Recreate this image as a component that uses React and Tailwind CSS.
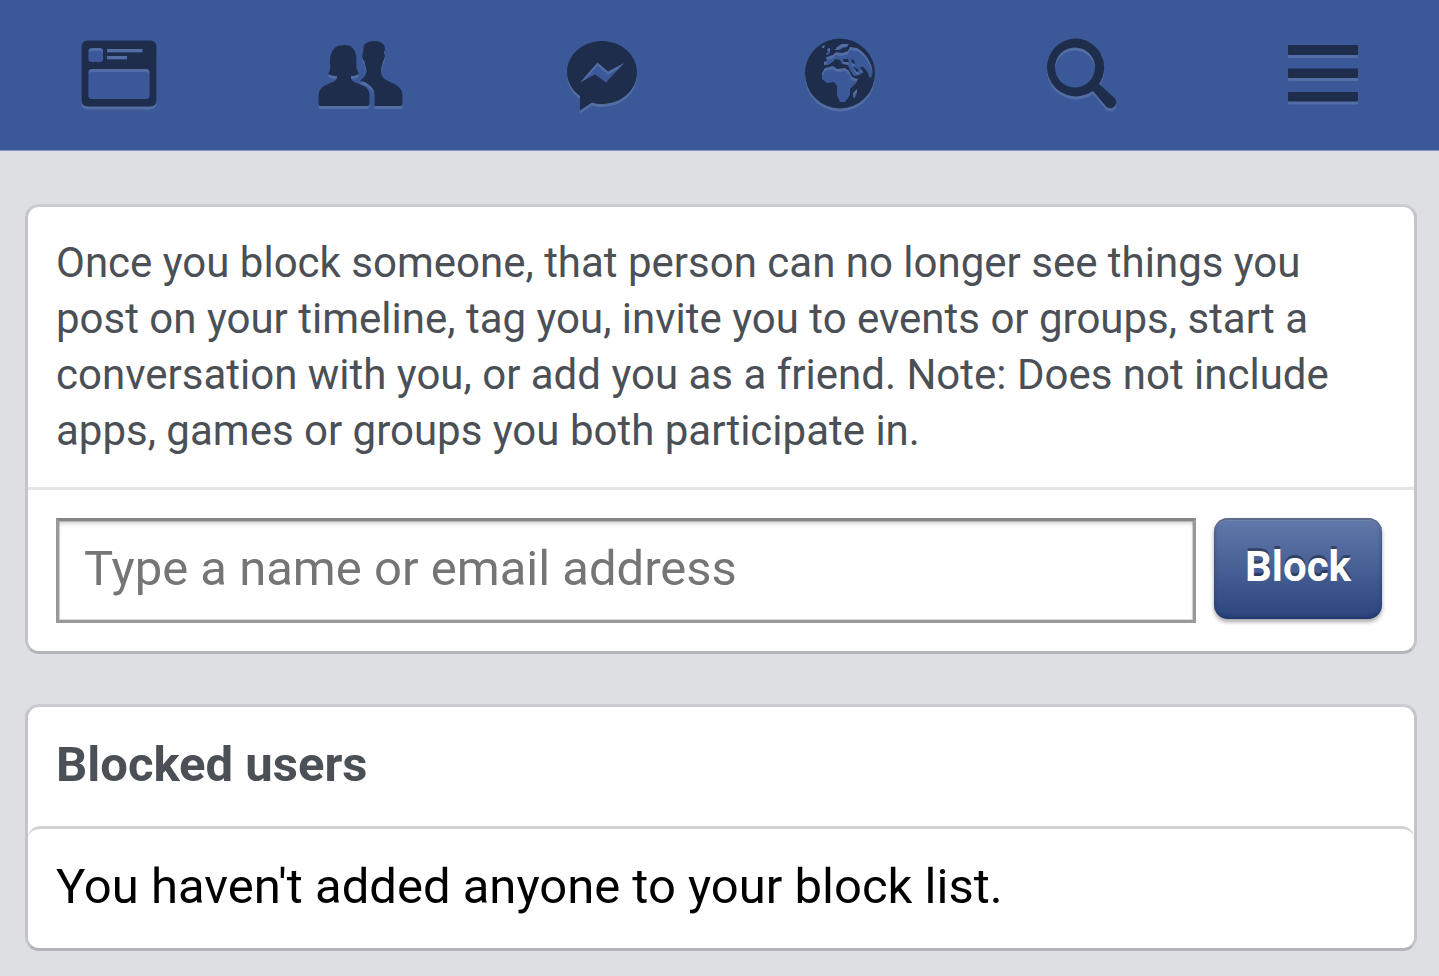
const iconClass =
  "block h-[90px] w-[90px] fill-[#1e2d4c] drop-shadow-[0_3px_0_rgba(255,255,255,0.13)]";

function FeedIcon() {
  return (
    <svg viewBox="0 0 90 90" className={iconClass} aria-hidden="true">
      <path
        fillRule="evenodd"
        d="M14 10.500H76Q82.500 10.500 82.500 17V70Q82.500 76.500 76 76.500H14Q7.500 76.500 7.500 70V17Q7.500 10.500 14 10.500ZM18 18Q14.500 18 14.500 21V29Q14.500 32 18 32H26Q29 32 29 29V21Q29 18 26 18ZM33 19V22.500H68.500V19ZM33 26V29.500H53V26ZM18 39Q14.500 39 14.500 42V66Q14.500 69 18 69H72Q75.500 69 75.500 66V42Q75.500 39 72 39Z"
      />
    </svg>
  );
}

function FriendsIcon() {
  return (
    <svg viewBox="0 0 90 90" className={iconClass} aria-hidden="true">
      <path d="M28 15.500C31 14.500 35 15.500 37 17.500C40 20 41.500 25 41.500 30C41.500 36 41 40 44 43.500C41.500 45.500 39 46 36 46C35.500 51 39 52 44 54C51 56.500 54.500 59 54.500 66V74Q54.500 76 52 76H5.500Q3.500 76 3.500 74V68C3.500 60 6 57 12 54.500C18 52 22.500 51 22 46C18.500 46 15 45.500 13 43.500C16 41 15 36 15 31C15 23 19 16 25 15.500Z" />
      <path d="M48.500 19C48 14 52 11 60 11C66 11 70 14 70 19.500L69 23C70.500 24 70 28 68 31.500C67 36 66 38 66 41C66 47 69 49 74 51.500C82 55 87.500 58 87.500 66V74Q87.500 76 85 76H59.500V66C59.500 58 54 53 45 50.500C49 48 51.500 45 51.500 40C50.500 37 50 34 49.500 31.500C47 29 47 25 48 23Z" />
    </svg>
  );
}

function MessengerIcon() {
  return (
    <svg viewBox="0 0 90 90" className={iconClass} aria-hidden="true">
      <path
        fillRule="evenodd"
        d="M46 11C65.500 11 81 25 81 42.500C81 60 65.500 74 46 74C42.500 74 39 73.500 36 72.500L24 80.500V66C16 60 11 52 11 42.500C11 25 26.500 11 46 11ZM24 52.500L39 44.500L50 52.500L68 33L52 41.500L41.500 32.500Z"
      />
    </svg>
  );
}

function GlobeIcon() {
  return (
    <svg viewBox="0 0 90 90" className={iconClass} aria-hidden="true">
      <path
        fillRule="evenodd"
        d="M44 8.500A35 35 0 1 1 44 78.500A35 35 0 1 1 44 8.500ZM39 20L41 17L46 14H53L51 17L47 18L44 20ZM28 32L31 31L30 27L37 25L40 22L46 23L52 21L54 17L61 18C68 22 73 29 75 35C77 40 77 44 75 48L73 47L72 43L69 39L67 37L64 37L67 42L64 45L58 46L54 40L52 35L46 34L44 30L39 29L37 32L32 35L28 35ZM26 43L29 38L37 36L41 39L49 38L53 41L56 47L62 49L60 53L54 59L54 65L49 72H44L41 65V56L38 52L31 53L26 49ZM57 68L57 63L61 59L61 63L59 68ZM30 24L32 22L31 19L34 18L34 23L31 25ZM26 16L29 15L28 18L26 18Z"
      />
      <path d="M47 29L52 29L53 32L48 32ZM55 29L58 30L59 34L56 33ZM57 36L63 40L61 42Z" />
    </svg>
  );
}

function SearchIcon() {
  return (
    <svg viewBox="0 0 90 90" className={iconClass} aria-hidden="true">
      <path
        fillRule="evenodd"
        d="M38 8.500A29 29 0 0 1 62 54L77 67.500C83 73 76 81.500 69.500 77L56 61A29 29 0 1 1 38 8.500ZM38 17.500A20 20 0 1 0 38 57.500A20 20 0 1 0 38 17.500Z"
      />
    </svg>
  );
}

function MenuIcon() {
  return (
    <svg viewBox="0 0 90 90" className={iconClass} aria-hidden="true">
      <rect x="10" y="15" width="70" height="10" rx="1" />
      <rect x="10" y="38.500" width="70" height="9.500" rx="1" />
      <rect x="10" y="62" width="70" height="9.500" rx="1" />
    </svg>
  );
}

const navItems = [
  { label: "News Feed", Icon: FeedIcon },
  { label: "Friend Requests", Icon: FriendsIcon },
  { label: "Messages", Icon: MessengerIcon },
  { label: "Notifications", Icon: GlobeIcon },
  { label: "Search", Icon: SearchIcon },
  { label: "Menu", Icon: MenuIcon },
];

const cardClass =
  "rounded-[14px] border-[3px] border-t-[#cbccd0] border-x-[#c4c5c7] border-b-[#b4b5b7] bg-white";

export default function App() {
  return (
    <div className="min-h-screen bg-[#dddfe3] font-['Roboto',sans-serif]">
      <nav className="flex justify-between border-b border-[#8296c0] bg-[#3b5998] pt-[30px] pr-[71px] pb-[30px] pl-[74px]">
        {navItems.map(({ label, Icon }) => (
          <a key={label} href="#" aria-label={label}>
            <Icon />
          </a>
        ))}
      </nav>

      <main className="flex flex-col gap-[50px] pt-[53px] pr-[22px] pb-6 pl-[25px]">
        <section className={cardClass}>
          <p className="border-b-[3px] border-[#e5e5e5] px-7 pt-7 pb-7 text-[42px] leading-[56px] text-[#4b4f56]">
            Once you block someone, that person can no longer see things you
            post on your timeline, tag you, invite you to events or groups,
            start a conversation with you, or add you as a friend. Note: Does
            not include apps, games or groups you both participate in.
          </p>
          <form
            className="flex items-start gap-[18px] pt-7 pr-8 pb-7 pl-7"
            onSubmit={(e) => e.preventDefault()}
          >
            <input
              type="text"
              aria-label="Name or email address"
              placeholder="Type a name or email address"
              className="h-[105px] min-w-0 flex-1 border-[3px] border-[#999] border-t-[#868686] px-[25px] pb-1 text-[49px] text-black shadow-[inset_0_4px_5px_-2px_rgba(0,0,0,0.22),inset_0_0_0_1px_rgba(0,0,0,0.15)] outline-none placeholder:text-[#757575]"
            />
            <button
              type="submit"
              className="h-[101px] rounded-[14px] bg-linear-to-b from-[#6279ab] to-[#2c467e] px-[31px] pb-1 text-[42px] font-bold text-white shadow-[0_3px_4px_rgba(0,0,0,0.35),inset_0_2px_1px_rgba(80,90,110,0.6),inset_0_3px_0_rgba(255,255,255,0.12),inset_0_-2px_4px_rgba(20,35,75,0.5)] text-shadow-[0_-3px_0_rgba(0,0,0,0.35)]"
            >
              Block
            </button>
          </form>
        </section>

        <section className={cardClass}>
          <h2 className="px-7 pt-7 pb-[31px] text-[49px] leading-[60px] font-bold text-[#4b4f56]">
            Blocked users
          </h2>
          <p className="rounded-t-[12px] border-t-[3px] border-[#d3d3d3] px-7 pt-7 pb-[31px] text-[49px] leading-[60px] text-black">
            You haven't added anyone to your block list.
          </p>
        </section>
      </main>
    </div>
  );
}
